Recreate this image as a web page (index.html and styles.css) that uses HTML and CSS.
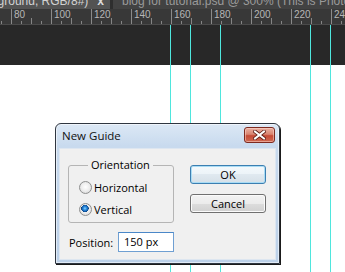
FILE: index.html
```html
<!DOCTYPE html>
<html>
<head>
<meta charset="utf-8">
<title>New Guide</title>
<link rel="stylesheet" href="styles.css">
</head>
<body>
<div class="app">
  <div class="tabs">
    <div class="tab active"><span class="tab-name">Background, RGB/8#)</span><span class="tab-close">x</span></div>
    <div class="tab inactive"><span class="tab-name">blog for tutorial.psd @ 300% (This is Photoshop)</span></div>
  </div>
  <div class="ruler">
    <span class="rl-lead"></span>
    <span class="rl-cell">80</span>
    <span class="rl-cell">100</span>
    <span class="rl-cell">120</span>
    <span class="rl-cell">140</span>
    <span class="rl-cell">160</span>
    <span class="rl-cell">180</span>
    <span class="rl-cell">200</span>
    <span class="rl-cell">220</span>
    <span class="rl-cell">240</span>
  </div>
  <div class="canvas"></div>
  <div class="doc"></div>

  <div class="guide g1"></div>
  <div class="guide g2"></div>
  <div class="guide g3"></div>
  <div class="guide g4"></div>
  <div class="guide g5"></div>

  <div class="dialog">
    <div class="titlebar">
      <span class="title">New Guide</span>
      <span class="close-btn">
        <svg width="13" height="10" viewBox="0 0 13 10">
          <path d="M2 1.5 L11 8.5 M11 1.5 L2 8.5" stroke="#5a1a12" stroke-width="3.6" stroke-linecap="square" fill="none"/>
          <path d="M2 1.5 L11 8.5 M11 1.5 L2 8.5" stroke="#ffffff" stroke-width="2" stroke-linecap="square" fill="none"/>
        </svg>
      </span>
    </div>
    <div class="client">
      <div class="row-top">
        <fieldset class="group">
          <legend>Orientation</legend>
          <div class="radio"><span class="dot"></span><span>Horizontal</span></div>
          <div class="radio"><span class="dot checked"></span><span>Vertical</span></div>
        </fieldset>
        <div class="buttons">
          <div class="btn default">OK</div>
          <div class="btn">Cancel</div>
        </div>
      </div>
      <div class="row-pos">
        <span class="pos-label">Position:</span>
        <span class="pos-input">150 px</span>
      </div>
    </div>
  </div>
</div>
</body>
</html>
```

FILE: styles.css
```css
html, body {
  margin: 0;
  padding: 0;
  background: #ffffff;
}

.app {
  position: relative;
  width: 345px;
  height: 272px;
  overflow: hidden;
  display: flex;
  flex-direction: column;
  font-family: "Open Sans", "Noto Sans", sans-serif;
}

/* ---------- document tabs ---------- */
.tabs {
  display: flex;
  height: 9px;
  flex: none;
  background: #2e2e2e;
  overflow: hidden;
}

.tab {
  display: flex;
  align-items: flex-start;
  height: 9px;
  overflow: hidden;
  white-space: nowrap;
  font: 12px/12px "Liberation Sans", Arial, sans-serif;
}

.tab-name {
  margin-top: -5px;
}

.tab.active {
  width: 110px;
  flex: none;
  justify-content: flex-end;
  background: #535353;
  color: #d2d2d2;
}

.tab-close {
  margin: -5px 6px 0 9px;
  font-weight: bold;
  color: #dcdcdc;
}

.tab.inactive {
  flex: 1;
  margin-left: 3px;
  padding-left: 9px;
  background: #424242;
  color: #9a9a9a;
}

/* ---------- ruler ---------- */
.ruler {
  display: flex;
  flex: none;
  height: 15px;
  border-bottom: 1px solid #4a4a4a;
  background-color: #383838;
  background-image:
    linear-gradient(to right, #858585 0 1px, transparent 1px),
    linear-gradient(to right, #858585 0 1px, transparent 1px);
  background-size: 20px 6px, 10px 3px;
  background-position: 11px 100%, 1px 100%;
  background-repeat: repeat-x;
}

.rl-lead {
  width: 11px;
  flex: none;
}

.rl-cell {
  width: 40px;
  flex: none;
  box-sizing: border-box;
  border-left: 1px solid #8a8a8a;
  padding: 1px 0 0 2px;
  font: 10px/10px "Liberation Sans", Arial, sans-serif;
  color: #b6b6b6;
}

/* ---------- canvas ---------- */
.canvas {
  flex: none;
  height: 40px;
  background: #282828;
}

.doc {
  flex: 1;
  background: #ffffff;
}

/* ---------- guides (positions on the canvas) ---------- */
.guide {
  position: absolute;
  top: 25px;
  bottom: 0;
  width: 1px;
  background: #4fe6dd;
}
.g1 { left: 170px; }
.g2 { left: 190px; }
.g3 { left: 220px; }
.g4 { left: 310px; }
.g5 { left: 330px; }

/* ---------- dialog window ---------- */
.dialog {
  position: absolute;
  left: 55px;
  top: 123px;
  width: 225px;
  height: 141px;
  box-sizing: border-box;
  border: 1px solid #2f3640;
  border-radius: 6px 6px 0 0;
  padding: 0 3px 3px;
  display: flex;
  flex-direction: column;
  background: linear-gradient(#dce8f5 0, #c8daee 22px, #bcd1e9 100%);
  box-shadow: inset 0 0 0 1px rgba(255, 255, 255, 0.55), 1px 1px 0 #1a1a1a;
}

.titlebar {
  display: flex;
  align-items: flex-start;
  height: 24px;
  flex: none;
}

.title {
  margin-left: 3px;
  font-size: 11.5px;
  line-height: 24px;
  color: #111111;
}

.close-btn {
  margin: 3px 1px 0 auto;
  width: 31px;
  height: 16px;
  box-sizing: border-box;
  border: 1px solid #7d2a1f;
  border-radius: 3px;
  display: flex;
  align-items: center;
  justify-content: center;
  background: linear-gradient(#eab0a2 0%, #d98470 45%, #c54a36 55%, #cf6a52 100%);
  box-shadow: inset 0 0 0 1px rgba(255, 220, 210, 0.5);
}

.client {
  flex: 1;
  background: #f0f0f0;
  border: 1px solid #dde6f0;
  padding: 8px 0 0 8px;
  font-size: 11px;
  color: #000000;
}

.row-top {
  display: flex;
  align-items: flex-start;
}

.group {
  width: 106px;
  box-sizing: border-box;
  margin: 0;
  padding: 3px 0 2px 10px;
  border: 1px solid #b5b5b5;
  border-radius: 3px;
}

.group legend {
  margin-left: 9px;
  padding: 0 3px;
  line-height: 16px;
}

.radio {
  display: flex;
  align-items: center;
  height: 22px;
}

.dot {
  width: 13px;
  height: 13px;
  box-sizing: border-box;
  margin-right: 2px;
  border-radius: 50%;
  border: 1px solid #8e8f8f;
  background: radial-gradient(circle at 50% 45%, #ffffff 0, #ededed 50%, #cfcfcf 100%);
}

.dot.checked {
  background:
    radial-gradient(circle at 45% 40%, #8fd6ff 0, #2d8ee0 1.6px, #135fb0 3px, #0b3f78 3.6px, transparent 3.8px),
    radial-gradient(circle at 50% 45%, #ffffff 0, #ededed 50%, #cfcfcf 100%);
}

.buttons {
  margin: 8px 0 0 16px;
  display: flex;
  flex-direction: column;
  gap: 10px;
}

.btn {
  width: 76px;
  height: 19px;
  box-sizing: border-box;
  border: 1px solid #707070;
  border-radius: 3px;
  text-align: center;
  line-height: 17px;
  background: linear-gradient(#f3f3f3 0%, #ebebeb 50%, #dddddd 50%, #d0d0d0 100%);
  box-shadow: inset 0 0 0 1px #fbfbfb;
}

.btn.default {
  border-color: #3c7fb1;
  background: linear-gradient(#f4f9fc 0%, #ecf3f8 50%, #e0e9f0 50%, #d6e0e8 100%);
  box-shadow: inset 0 0 0 1px #a9dcf5;
}

.row-pos {
  display: flex;
  align-items: center;
  margin-top: 9px;
}

.pos-label {
  width: 49px;
  margin-left: 1px;
}

.pos-input {
  width: 56px;
  height: 20px;
  box-sizing: border-box;
  border: 1px solid #6f9fd2;
  border-top-color: #4a87c8;
  background: #ffffff;
  padding-left: 5px;
  line-height: 18px;
}
```
